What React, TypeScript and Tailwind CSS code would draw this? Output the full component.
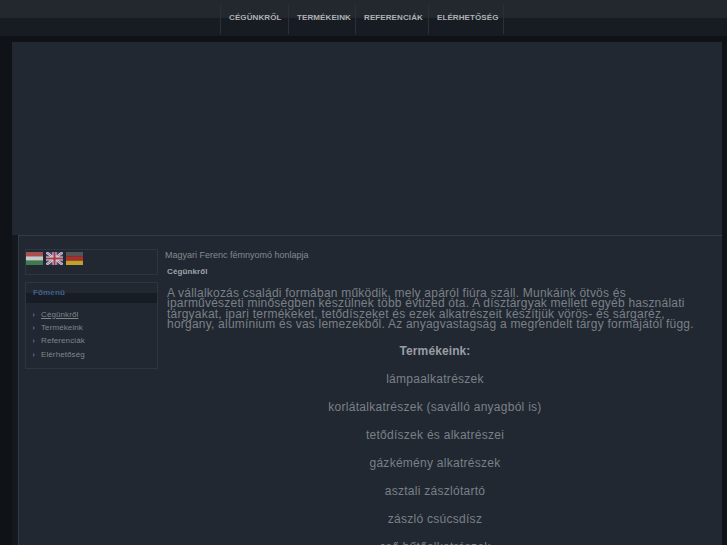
const navItems = [
  { label: 'CÉGÜNKRŐL', width: 'w-[68px]' },
  { label: 'TERMÉKEINK', width: 'w-[67px]' },
  { label: 'REFERENCIÁK', width: 'w-[73px]' },
  { label: 'ELÉRHETŐSÉG', width: 'w-[75px]' },
];
const menuItems = ['Cégünkről', 'Termékeink', 'Referenciák', 'Elérhetőség'];
const products = [
  'lámpaalkatrészek',
  'korlátalkatrészek (saválló anyagból is)',
  'tetődíszek és alkatrészei',
  'gázkémény alkatrészek',
  'asztali zászlótartó',
  'zászló csúcsdísz',
  'cső hűtőalkatrészek',
];

function Flags() {
  return (
    <div className="flex gap-[3px]">
      <svg width="17" height="13" viewBox="0 0 17 13">
        <rect width="17" height="4.3" fill="#a8504f" />
        <rect y="4.3" width="17" height="4.4" fill="#c9c9c9" />
        <rect y="8.7" width="17" height="4.3" fill="#3f7a4c" />
      </svg>
      <svg width="17" height="13" viewBox="0 0 17 13">
        <rect width="17" height="13" fill="#39407a" />
        <path d="M0 0L17 13M17 0L0 13" stroke="#d8d8d8" strokeWidth="2.4" />
        <path d="M0 0L17 13M17 0L0 13" stroke="#a84a58" strokeWidth="0.8" />
        <path d="M8.5 0V13M0 6.5H17" stroke="#d8d8d8" strokeWidth="4" />
        <path d="M8.5 0V13M0 6.5H17" stroke="#a83c4c" strokeWidth="2.2" />
      </svg>
      <svg width="17" height="13" viewBox="0 0 17 13">
        <rect width="17" height="4.3" fill="#555555" />
        <rect y="4.3" width="17" height="4.4" fill="#a8302c" />
        <rect y="8.7" width="17" height="4.3" fill="#c2a02c" />
      </svg>
    </div>
  );
}

export default function App() {
  return (
    <div className="h-[545px] overflow-hidden bg-[#0f1317] font-['Liberation_Sans',Arial,sans-serif]">
      {/* Top nav */}
      <div className="h-[36px] bg-[linear-gradient(#23282f_0,#23282f_18px,#171b22_18px,#171b22_36px)] flex pl-[220px] pt-[4px]">
        <div className="flex h-[30px] border-l border-[#2b3037]">
          {navItems.map((item) => (
            <div key={item.label} className={`${item.width} pl-[8px] pb-[2px] flex items-center border-r border-[#2b3037] text-[8px] font-bold tracking-[0.1px] text-[#b0b2b5] whitespace-nowrap`}>
              {item.label}
            </div>
          ))}
        </div>
      </div>

      <div className="h-[6px]" />

      <div className="ml-[12px] mr-[5px]">
        {/* Banner */}
        <div className="h-[193px] bg-[#212832]" />

        {/* Content */}
        <div className="pl-[6px] bg-[#141920]">
          <div className="border-t border-l border-[#323a45] bg-[#212832] flex pl-[6px] pt-[13px] gap-[7px] h-[400px]">
            <div className="w-[133px] shrink-0">
              <div className="h-[26px] border border-[#2d3540] pt-[2px]">
                <Flags />
              </div>
              <div className="mt-[7px] h-[87px] border border-[#2d3540]">
                <div className="h-[20px] bg-[linear-gradient(#212832_0,#212832_10px,#171c25_10px,#171c25_20px)] pl-[7px] pt-[5px] text-[8px] leading-[10px] font-bold tracking-[0.15px] text-[#41618c]">
                  Főmenü
                </div>
                <ul className="pt-[5px] pl-[7px]">
                  {menuItems.map((item, i) => (
                    <li key={item} className="h-[13.3px] flex items-center gap-[6px] text-[8px] tracking-[0.1px] text-[#80858b]">
                      <span className="w-0 h-0 border-y-[2px] border-y-transparent border-l-[2px] border-l-[#41618c]" />
                      <span className={i === 0 ? 'underline' : ''}>{item}</span>
                    </li>
                  ))}
                </ul>
              </div>
            </div>

            <div className="flex-1 min-w-0">
              <div className="mt-[1px] text-[9px] leading-[11px] text-[#84898f]">Magyari Ferenc fémnyomó honlapja</div>
              <div className="mt-[6px] pl-[2px] text-[8px] leading-[10px] font-bold tracking-[0.1px] text-[#a0a4a8]">Cégünkről</div>
              <div className="mt-[11px] pl-[2px] pr-[19px] text-[12px] leading-[10.4px] text-[#7b8086]">
                <p className="tracking-[0.22px]">
                  A vállalkozás családi formában működik, mely apáról fiúra száll. Munkáink ötvös és iparművészeti minőségben készülnek több évtized óta. A dísztárgyak mellett egyéb használati tárgyakat, ipari termékeket, tetődíszeket és ezek alkatrészeit készítjük vörös- és sárgaréz, horgany, alumínium és vas lemezekből. Az anyagvastagság a megrendelt tárgy formájától függ.
                </p>
                <div className="mt-[14px] text-center tracking-[0.27px]">
                  <div className="h-[28px] leading-[14px] font-bold tracking-[0.1px] text-[#9a9ea3]">Termékeink:</div>
                  {products.map((p) => (
                    <div key={p} className="h-[28px] leading-[14px]">{p}</div>
                  ))}
                </div>
              </div>
            </div>
          </div>
        </div>
      </div>
    </div>
  );
}
